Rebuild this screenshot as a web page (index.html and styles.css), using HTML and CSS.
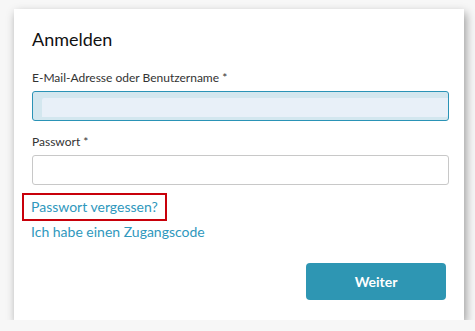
FILE: index.html
```html
<!DOCTYPE html>
<html lang="de">
<head>
  <meta charset="UTF-8">
  <title>Anmelden</title>
  <link rel="stylesheet" href="styles.css">
</head>
<body>
  <div class="login-card">
    <h1>Anmelden</h1>

    <label class="field-label" for="user">E-Mail-Adresse oder Benutzername *</label>
    <input class="text-input autofilled" id="user" type="text">

    <label class="field-label" for="pass">Passwort *</label>
    <input class="text-input" id="pass" type="password">

    <div class="links">
      <a href="#" class="link highlighted">Passwort vergessen?</a>
      <a href="#" class="link">Ich habe einen Zugangscode</a>
    </div>

    <div class="actions">
      <button class="submit-button">Weiter</button>
    </div>
  </div>
</body>
</html>
```

FILE: styles.css
```css
body {
  margin: 0;
  padding: 9px 11px 0 14px;
  background: #f7f7f7;
  font-family: Lato, 'Liberation Sans', sans-serif;
  color: #222222;
}

.login-card {
  width: 450px;
  height: 311px;
  box-sizing: border-box;
  background: #ffffff;
  box-shadow: 2px 4px 9px rgba(0, 0, 0, 0.38);
  padding: 19px 15px 0 18px;
  display: flex;
  flex-direction: column;
}

h1 {
  font-size: 18px;
  font-weight: 400;
  line-height: 22px;
  margin: 0 0 15px;
  color: #111111;
}

.field-label {
  font-size: 12px;
  line-height: 15px;
  margin: 5px 0 6px;
  color: #333333;
}

.text-input {
  display: block;
  width: 100%;
  height: 30px;
  box-sizing: border-box;
  border: 1px solid #c8c8c8;
  border-radius: 3px;
  margin: 0 0 8px;
  padding: 0 8px;
  background: #ffffff;
}

.text-input.autofilled {
  border-color: #2a93b6;
  background: #e8f0f8;
  box-shadow: inset 9px 6px 0 #d3e7ef, inset 0 -3px 0 #d3e7ef;
}

.links {
  display: flex;
  flex-direction: column;
  align-items: flex-start;
}

.link {
  font-size: 14px;
  line-height: 17px;
  color: #2f98bd;
  text-decoration: none;
  padding: 3px 7px 4px 7px;
  margin-left: -10px;
  border: 2px solid transparent;
}

.link + .link {
  margin-top: -3px;
}

.link.highlighted {
  border-color: #c8000a;
}

.actions {
  display: flex;
  justify-content: flex-end;
  margin-top: 17px;
  padding-right: 3px;
}

.submit-button {
  width: 140px;
  height: 37px;
  border: none;
  border-radius: 4px;
  background: #2e96b3;
  color: #ffffff;
  font-family: Lato, 'Liberation Sans', sans-serif;
  font-size: 14px;
  font-weight: 700;
}
```
